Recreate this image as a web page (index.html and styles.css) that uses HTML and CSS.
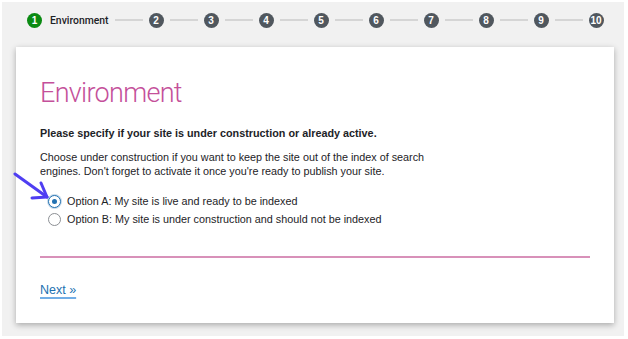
FILE: index.html
```html
<html>
  <head>
    <link rel="stylesheet" href="styles.css">
  </head>
  <body>
    <div class="wizard">
      <!-- step indicator across the top -->
      <div class="steps">
        <span class="step-num active">1</span>
        <span class="step-label">Environment</span>
        <span class="step-line"></span><span class="step-num">2</span>
        <span class="step-line"></span><span class="step-num">3</span>
        <span class="step-line"></span><span class="step-num">4</span>
        <span class="step-line"></span><span class="step-num">5</span>
        <span class="step-line"></span><span class="step-num">6</span>
        <span class="step-line"></span><span class="step-num">7</span>
        <span class="step-line"></span><span class="step-num">8</span>
        <span class="step-line"></span><span class="step-num">9</span>
        <span class="step-line"></span><span class="step-num">10</span>
      </div>

      <div class="card">
        <h1 class="title">Environment</h1>
        <p class="lead">Please specify if your site is under construction or already active.</p>
        <p class="desc">Choose under construction if you want to keep the site out of the index of search<br>engines. Don't forget to activate it once you're ready to publish your site.</p>
        <div class="options">
          <label class="option"><input type="radio" name="env" checked> Option A: My site is live and ready to be indexed</label>
          <label class="option"><input type="radio" name="env"> Option B: My site is under construction and should not be indexed</label>
        </div>
        <hr class="divider">
        <a class="next" href="#">Next &raquo;</a>
      </div>

      <!-- annotation arrow pointing at option A -->
      <svg class="arrow" width="40" height="34" viewBox="0 0 40 34">
        <line x1="2" y1="2" x2="34" y2="25" stroke="#4f3ef2" stroke-width="3" stroke-linecap="round"/>
        <polyline points="28,11 34,25 19,26" fill="none" stroke="#4f3ef2" stroke-width="3" stroke-linecap="round" stroke-linejoin="round"/>
      </svg>
    </div>
  </body>
</html>
```

FILE: styles.css
```css
body {
  margin: 0;
  padding: 2px;
  background: #fff;
  font-family: "Liberation Sans", Arial, sans-serif;
  color: #1d2327;
}

.wizard {
  position: relative;
  width: 622px;
  height: 334px;
  background: #f1f1f1;
  overflow: hidden;
}

.steps {
  display: flex;
  align-items: center;
  height: 36px;
  padding-left: 25px;
}

.step-num {
  width: 15px;
  height: 15px;
  border-radius: 50%;
  background: #50575e;
  color: #fff;
  font-size: 10px;
  font-weight: bold;
  display: flex;
  align-items: center;
  justify-content: center;
  flex-shrink: 0;
}

.step-num.active {
  background: #0a8a12;
}

.step-label {
  margin-left: 8px;
  font-family: Roboto, sans-serif;
  font-weight: 500;
  font-size: 10.4px;
  color: #1d2327;
}

.step-line {
  width: 28px;
  height: 2px;
  margin: 0 6px;
  background: #d5d5d5;
}

.card {
  box-sizing: border-box;
  width: 598px;
  height: 276px;
  margin: 9px 0 0 14px;
  padding: 29px 24px 0;
  background: #fff;
  box-shadow: 0 2px 6px rgba(0, 0, 0, 0.3);
}

.title {
  margin: 0;
  font-family: Roboto, sans-serif;
  font-weight: 300;
  font-size: 27px;
  letter-spacing: -0.7px;
  line-height: 34px;
  color: #c4509a;
}

.lead {
  margin: 15px 0 0;
  font-size: 10.8px;
  font-weight: bold;
  line-height: 16px;
}

.desc {
  margin: 9px 0 0;
  font-size: 10.8px;
  line-height: 14px;
}

.options {
  margin-top: 14px;
}

.option {
  display: flex;
  align-items: center;
  height: 18px;
  font-size: 10.8px;
}

.option input {
  appearance: none;
  box-sizing: border-box;
  width: 13px;
  height: 13px;
  margin: 0 6px 0 8px;
  border: 1px solid #8c8f94;
  border-radius: 50%;
  background: #fff;
  display: flex;
  align-items: center;
  justify-content: center;
}

.option input:checked {
  border-color: #2271b1;
  box-shadow: 0 0 0 1px rgba(34, 113, 177, 0.25);
}

.option input:checked::before {
  content: "";
  width: 5px;
  height: 5px;
  border-radius: 50%;
  background: #2271b1;
}

.divider {
  margin: 28px 0 0;
  border: 0;
  height: 2px;
  background: #d891b9;
}

.next {
  display: inline-block;
  margin-top: 25px;
  font-size: 12.5px;
  color: #2271b1;
  text-decoration: underline;
  text-decoration-color: #72aee6;
  text-decoration-thickness: 2px;
  text-underline-offset: 3px;
}

.arrow {
  position: absolute;
  left: 11px;
  top: 170px;
}
```
